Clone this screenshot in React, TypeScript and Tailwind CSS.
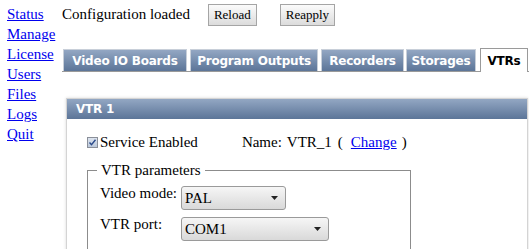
import React from "react"

const serif = { fontFamily: '"Liberation Serif", "Times New Roman", serif' }
const sans = { fontFamily: '"DejaVu Sans", Verdana, sans-serif' }

const navLinks = ["Status", "Manage", "License", "Users", "Files", "Logs", "Quit"]
const tabs = [
  { label: "Video IO Boards", w: "w-[124px] ml-[1px]" },
  { label: "Program Outputs", w: "w-[128px] ml-[3px]" },
  { label: "Recorders", w: "w-[83px] ml-[3px]" },
  { label: "Storages", w: "w-[70px] ml-[2px]" },
  { label: "VTRs", w: "w-[48px] ml-[4px]" },
]

function Select({ value, width }: { value: string; width: string }) {
  return (
    <div
      className={`flex h-[24px] shrink-0 items-center justify-between rounded-[3px] border border-[#9a9a9a] bg-gradient-to-b from-[#f6f6f6] to-[#d9d9d9] pl-[3px] pr-[7px] text-[15px] text-black ${width}`}
    >
      <span>{value}</span>
      <svg width="7" height="4" viewBox="0 0 7 4">
        <path d="M0 0h7L3.5 4z" fill="#222" />
      </svg>
    </div>
  )
}

export default function App() {
  return (
    <div className="flex h-[249px] w-[529px] items-start overflow-hidden bg-white text-black" style={serif}>
      {/* Left nav */}
      <div className="flex w-[62px] shrink-0 flex-col pl-[7px] pt-[4px] text-[15px] leading-[20px]">
        {navLinks.map((l) => (
          <a key={l} href="#" className="text-[#0000ee] underline">
            {l}
          </a>
        ))}
      </div>

      {/* Main */}
      <div className="flex min-w-0 flex-1 flex-col">
        {/* Status row */}
        <div className="flex h-[47px] shrink-0 items-start pt-[4px]">
          <span className="whitespace-nowrap text-[15px] leading-[20px]">Configuration loaded</span>
          <button className="ml-[18px] h-[22px] border border-[#a5a5a5] bg-gradient-to-b from-[#fbfbfb] to-[#dcdcdc] px-[5px] text-[13px] leading-[18px]">
            Reload
          </button>
          <button className="ml-[23px] h-[22px] border border-[#a5a5a5] bg-gradient-to-b from-[#fbfbfb] to-[#dcdcdc] px-[5px] text-[13px] leading-[18px]">
            Reapply
          </button>
        </div>

        {/* Tabs */}
        <div className="flex h-[25px] shrink-0 items-end border-b border-[#9a9a9a]" style={sans}>
          {tabs.map((t) =>
            t.label === "VTRs" ? (
              <div
                key={t.label}
                className={`-mb-px flex h-[24px] shrink-0 items-center justify-center whitespace-nowrap border border-b-0 border-[#9a9a9a] bg-white text-[12px] font-bold tracking-[-0.2px] text-black ${t.w}`}
              >
                {t.label}
              </div>
            ) : (
              <div
                key={t.label}
                className={`flex h-[22px] shrink-0 items-center justify-center whitespace-nowrap border border-b-0 border-[#c8cfd9] bg-gradient-to-b from-[#93a7c3] to-[#5c7598] text-[12px] font-bold tracking-[-0.2px] text-white ${t.w}`}
              >
                {t.label}
              </div>
            )
          )}
        </div>

        {/* Panel */}
        <div className="ml-[4px] mr-[1px] mt-[26px] flex h-[200px] shrink-0 flex-col border border-[#d4d4d4] shadow-[0_0_3px_rgba(0,0,0,0.15)]">
          <div
            className="flex h-[20px] shrink-0 items-center bg-gradient-to-b from-[#93a7c3] to-[#5c7598] px-[9px] text-[12px] font-bold tracking-[-0.2px] text-white"
            style={sans}
          >
            VTR 1
          </div>
          <div className="pl-[20px] pt-[13px]">
            <div className="flex h-[20px] items-center whitespace-nowrap text-[15px] leading-[20px]">
              <svg width="11" height="11" viewBox="0 0 11 11" className="shrink-0">
                <defs>
                  <linearGradient id="cb" x1="0" y1="0" x2="0" y2="1">
                    <stop offset="0" stopColor="#dfe6f0" />
                    <stop offset="1" stopColor="#b9c6d9" />
                  </linearGradient>
                </defs>
                <rect x="0.5" y="0.5" width="10" height="10" fill="url(#cb)" stroke="#8a8f99" />
                <path d="M2.5 5.5l2 2.2 4-5" fill="none" stroke="#2a4a8a" strokeWidth="1.4" />
              </svg>
              <span className="ml-[2px]">Service Enabled</span>
              <span className="ml-[44px]">Name:</span>
              <span className="ml-[5px]">VTR_1</span>
              <span className="ml-[6px]">(</span>
              <a href="#" className="ml-[8px] text-[#0000ee] underline">
                Change
              </a>
              <span className="ml-[5px]">)</span>
            </div>

            <fieldset className="mt-[9px] w-[324px] border border-[#8c8c8c] p-0 pb-[10px]">
              <legend className="ml-[9px] px-[4px] text-[15px] leading-[18px]">VTR parameters</legend>
              <div className="mt-[7px] flex whitespace-nowrap pl-[12px] text-[15px]">
                <span className="w-[81px] shrink-0 self-start leading-[14px]">Video mode:</span>
                <Select value="PAL" width="w-[105px]" />
              </div>
              <div className="mt-[7px] flex whitespace-nowrap pl-[12px] text-[15px]">
                <span className="w-[81px] shrink-0 self-start leading-[14px]">VTR port:</span>
                <Select value="COM1" width="w-[148px]" />
              </div>
            </fieldset>
          </div>
        </div>
      </div>
    </div>
  )
}
